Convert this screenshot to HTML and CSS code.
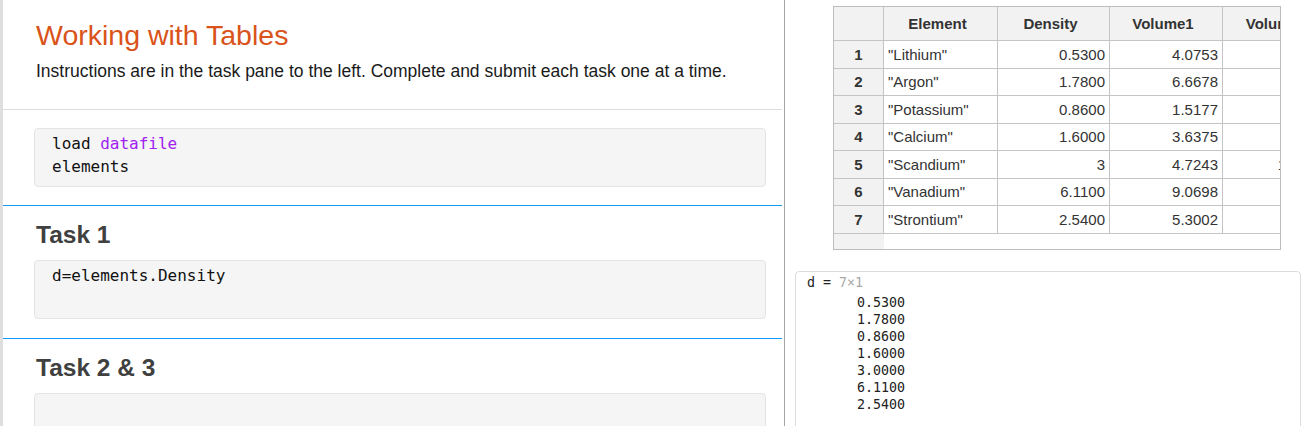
FILE: index.html
```html
<!DOCTYPE html>
<html>
<head>
<meta charset="utf-8">
<link rel="stylesheet" href="styles.css">
</head>
<body>
<div class="app">
  <div class="left">
    <div class="intro">
      <h1 class="title">Working with Tables</h1>
      <p class="instr">Instructions are in the task pane to the left. Complete and submit each task one at a time.</p>
    </div>
    <div class="setup">
      <div class="code"><div>load <span class="str">datafile</span></div><div>elements</div></div>
    </div>
    <div class="task">
      <h2 class="task-title">Task 1</h2>
      <div class="code"><div>d=elements.Density</div></div>
    </div>
    <div class="task task-last">
      <h2 class="task-title">Task 2 &amp; 3</h2>
      <div class="code"></div>
    </div>
  </div>
  <div class="divider"></div>
  <div class="right">
    <div class="tablewrap">
      <table class="grid">
        <colgroup>
          <col class="c-idx"><col class="c-el"><col class="c-den"><col class="c-v1"><col class="c-v2">
        </colgroup>
        <thead>
          <tr><th class="idx"></th><th>Element</th><th>Density</th><th>Volume1</th><th>Volume2</th></tr>
        </thead>
        <tbody>
          <tr><td class="idx">1</td><td class="txt">"Lithium"</td><td>0.5300</td><td>4.0753</td><td>3.2145</td></tr>
          <tr><td class="idx">2</td><td class="txt">"Argon"</td><td>1.7800</td><td>6.6678</td><td>5.1234</td></tr>
          <tr><td class="idx">3</td><td class="txt">"Potassium"</td><td>0.8600</td><td>1.5177</td><td>2.3456</td></tr>
          <tr><td class="idx">4</td><td class="txt">"Calcium"</td><td>1.6000</td><td>3.6375</td><td>4.5678</td></tr>
          <tr><td class="idx">5</td><td class="txt">"Scandium"</td><td>3</td><td>4.7243</td><td>12.3456</td></tr>
          <tr><td class="idx">6</td><td class="txt">"Vanadium"</td><td>6.1100</td><td>9.0698</td><td>7.8901</td></tr>
          <tr><td class="idx">7</td><td class="txt">"Strontium"</td><td>2.5400</td><td>5.3002</td><td>6.5432</td></tr>
          <tr class="filler"><td class="idx"></td><td></td><td></td><td></td><td></td></tr>
        </tbody>
      </table>
    </div>
    <div class="output">
      <div class="out-head">d = <span class="dim">7×1</span></div>
      <div class="out-vals">
        <div>0.5300</div><div>1.7800</div><div>0.8600</div><div>1.6000</div><div>3.0000</div><div>6.1100</div><div>2.5400</div>
      </div>
    </div>
  </div>
</div>
</body>
</html>
```
FILE: styles.css
```css
html, body {
  margin: 0;
  padding: 0;
  background: #fff;
}
body {
  font-family: "Liberation Sans", Arial, sans-serif;
  color: #222;
  overflow: hidden;
}
.app {
  display: flex;
  height: 426px;
}
.left {
  width: 779px;
  flex: none;
  border-left: 3px solid #dedede;
}
.intro {
  padding: 18px 16px 27px 33px;
  border-bottom: 1px solid #dcdcdc;
}
.title {
  margin: 0;
  font-weight: normal;
  font-size: 28.5px;
  line-height: 34px;
  color: #d9531a;
}
.instr {
  margin: 8px 0 0 0;
  font-size: 17.5px;
  line-height: 22px;
  color: #1a1a1a;
}
.setup {
  padding: 18px 16px 18px 33px;
  border-bottom: 1px solid #1a9bf5;
}
.task {
  padding: 13px 16px 19px 33px;
  border-bottom: 1px solid #0a9cff;
}
.task-last {
  border-bottom: none;
}
.task-title {
  margin: 0 0 9px 0;
  font-size: 24.5px;
  line-height: 32px;
  font-weight: bold;
  color: #404040;
}
.code {
  box-sizing: border-box;
  height: 59px;
  margin-left: -2px;
  padding: 3px 18px 0 17px;
  background: #f5f5f5;
  border: 1px solid #e4e4e4;
  border-radius: 4px;
  font-family: "DejaVu Sans Mono", "Liberation Mono", monospace;
  font-size: 16px;
  line-height: 23px;
  color: #111;
}
.str {
  color: #a020f0;
}
.divider {
  flex: none;
  width: 1px;
  margin-left: 2px;
  background: #a6a6a6;
}
.right {
  flex: 1;
  min-width: 0;
}
.tablewrap {
  box-sizing: border-box;
  width: 448px;
  margin: 6px 0 0 48px;
  border: 1px solid #bdbdbd;
  overflow: hidden;
}
.grid {
  table-layout: fixed;
  width: 503px;
  border-collapse: separate;
  border-spacing: 0;
  font-family: "Liberation Sans", Arial, sans-serif;
  font-size: 15px;
  color: #333;
}
.c-idx { width: 50px; }
.c-el { width: 114px; }
.c-den { width: 112px; }
.c-v1 { width: 113px; }
.c-v2 { width: 114px; }
.grid th, .grid td {
  border-right: 1px solid #c4c4c4;
  border-bottom: 1px solid #c4c4c4;
  padding: 0 4px;
  white-space: nowrap;
  overflow: hidden;
}
.grid th {
  height: 33px;
  background: #f2f2f2;
  font-weight: bold;
  text-align: center;
  padding-right: 10px;
  color: #333;
}
.grid td {
  height: 26.5px;
  text-align: right;
}
.grid td.txt {
  text-align: left;
}
.grid .idx {
  background: #f2f2f2;
  font-weight: bold;
  text-align: center;
  padding: 0;
}
.grid tr.filler td {
  height: 15px;
  border: none;
}
.output {
  box-sizing: border-box;
  width: 506px;
  height: 190px;
  margin: 21px 0 0 10px;
  padding: 2px 0 0 11px;
  border: 1px solid #dcdcdc;
  border-radius: 4px;
  font-family: "DejaVu Sans Mono", "Liberation Mono", monospace;
  font-size: 13.3px;
  line-height: 17px;
  color: #222;
}
.dim {
  color: #a8a8a8;
}
.out-vals {
  margin-top: 3px;
  padding-left: 50px;
}
```
